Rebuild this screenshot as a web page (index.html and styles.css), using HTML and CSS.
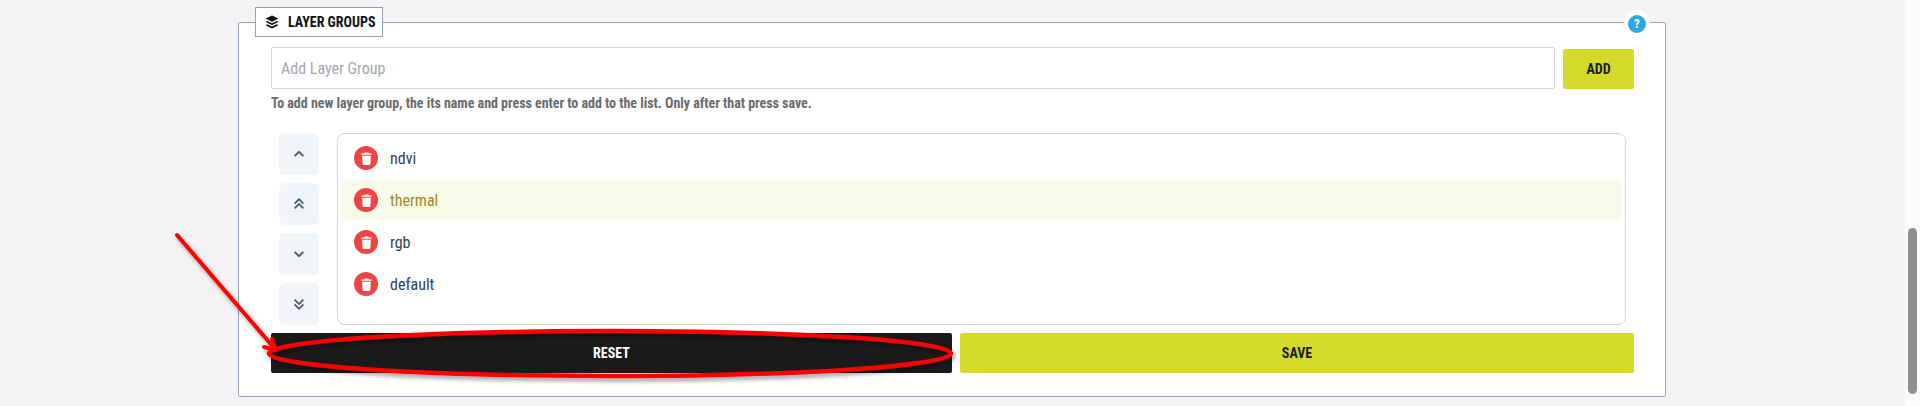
FILE: index.html
```html
<!DOCTYPE html>
<html lang="en">
<head>
    <meta charset="UTF-8">
    <meta name="viewport" content="width=device-width, initial-scale=1.0">
    <title>Layer Groups</title>
    <link rel="stylesheet" href="styles.css">
</head>
<body>
    <div class="page">
        <main class="content">
            <fieldset class="panel">
                <legend class="panel-title">
                    <svg class="title-icon" viewBox="0 0 24 24"><path d="M12 1 L23 6.2 L12 11.4 L1 6.2 Z"/><path d="M3.6 10.2 L12 14.2 L20.4 10.2 L23 11.9 L12 17 L1 11.9 Z"/><path d="M3.6 15.9 L12 19.9 L20.4 15.9 L23 17.6 L12 23 L1 17.6 Z"/></svg>
                    LAYER GROUPS
                </legend>
                <span class="help"><span class="help-dot">?</span></span>

                <div class="add-row">
                    <input class="add-input" type="text" placeholder="Add Layer Group">
                    <button class="btn btn-lime btn-add">ADD</button>
                </div>
                <p class="hint">To add new layer group, the its name and press enter to add to the list. Only after that press save.</p>

                <div class="editor">
                    <div class="move-col">
                        <button class="move-btn"><svg viewBox="0 0 16 16"><path d="M3 10.5 L8 5.5 L13 10.5"/></svg></button>
                        <button class="move-btn"><svg viewBox="0 0 16 16"><path d="M3 7.5 L8 2.5 L13 7.5"/><path d="M3 13 L8 8 L13 13"/></svg></button>
                        <button class="move-btn"><svg viewBox="0 0 16 16"><path d="M3 5.5 L8 10.5 L13 5.5"/></svg></button>
                        <button class="move-btn"><svg viewBox="0 0 16 16"><path d="M3 3 L8 8 L13 3"/><path d="M3 8.5 L8 13.5 L13 8.5"/></svg></button>
                    </div>
                    <ul class="group-list">
                        <li class="group-item"><span class="trash"><svg viewBox="0 0 12 14"><path d="M4 0.5 H8 L8.6 1.6 H11.6 V3 H0.4 V1.6 H3.4 Z"/><path d="M1.2 4 H10.8 L10.2 13 Q10.1 14 9.2 14 H2.8 Q1.9 14 1.8 13 Z"/></svg></span>ndvi</li>
                        <li class="group-item selected"><span class="trash"><svg viewBox="0 0 12 14"><path d="M4 0.5 H8 L8.6 1.6 H11.6 V3 H0.4 V1.6 H3.4 Z"/><path d="M1.2 4 H10.8 L10.2 13 Q10.1 14 9.2 14 H2.8 Q1.9 14 1.8 13 Z"/></svg></span>thermal</li>
                        <li class="group-item"><span class="trash"><svg viewBox="0 0 12 14"><path d="M4 0.5 H8 L8.6 1.6 H11.6 V3 H0.4 V1.6 H3.4 Z"/><path d="M1.2 4 H10.8 L10.2 13 Q10.1 14 9.2 14 H2.8 Q1.9 14 1.8 13 Z"/></svg></span>rgb</li>
                        <li class="group-item"><span class="trash"><svg viewBox="0 0 12 14"><path d="M4 0.5 H8 L8.6 1.6 H11.6 V3 H0.4 V1.6 H3.4 Z"/><path d="M1.2 4 H10.8 L10.2 13 Q10.1 14 9.2 14 H2.8 Q1.9 14 1.8 13 Z"/></svg></span>default</li>
                    </ul>
                </div>

                <div class="actions">
                    <button class="btn btn-dark">RESET</button>
                    <button class="btn btn-lime">SAVE</button>
                </div>
            </fieldset>
        </main>
        <div class="scrollbar"><div class="scrollbar-thumb"></div></div>
    </div>

    <!-- red marker drawn on top of the screenshot -->
    <svg class="markup" viewBox="0 0 1920 406">
        <defs>
            <filter id="markShadow" x="-5%" y="-30%" width="110%" height="170%">
                <feDropShadow dx="2" dy="3" stdDeviation="2" flood-color="#000" flood-opacity="0.4"/>
            </filter>
        </defs>
        <g filter="url(#markShadow)" fill="none" stroke="#ff0000" stroke-linecap="round">
            <path d="M177 235 L275 349" stroke-width="4"/>
            <path d="M272 339 L276 350 L264 347" stroke-width="4" stroke-linejoin="round"/>
            <ellipse cx="610" cy="353.5" rx="341" ry="22.5" stroke-width="4.5"/>
        </g>
    </svg>
</body>
</html>
```

FILE: styles.css
```css
* {
    margin: 0;
    padding: 0;
    box-sizing: border-box;
}

html, body {
    height: 406px;
    overflow: hidden;
}

body {
    background: #f4f4f4;
    font-family: "Roboto Condensed", "Liberation Sans Narrow", Roboto, sans-serif;
    font-stretch: condensed;
}

button {
    font-family: inherit;
    font-stretch: inherit;
    border: none;
    cursor: pointer;
}

.page {
    display: flex;
    height: 406px;
}

.content {
    flex: 1;
    padding: 7px 239px 0 238px;
}

.panel {
    position: relative;
    height: 390px;
    background: #fff;
    border: 1px solid #94a3bd;
    border-radius: 2px;
    padding: 10px 31px 0 32px;
}

.panel-title {
    display: flex;
    align-items: center;
    gap: 9px;
    width: 128px;
    height: 30px;
    margin-left: -16px;
    padding-left: 9px;
    background: #fff;
    border: 1px solid #94a3bd;
    font-size: 14px;
    font-weight: 700;
    color: #111;
    white-space: nowrap;
}

.title-icon {
    flex: none;
    width: 14px;
    height: 14px;
    fill: #111;
}

.help {
    position: absolute;
    top: -27px;
    right: 15px;
    width: 26px;
    height: 26px;
    display: flex;
    align-items: center;
    justify-content: center;
    background: #fff;
    border-radius: 50%;
}

.help-dot {
    width: 18px;
    height: 18px;
    margin-top: 2px;
    border-radius: 50%;
    background: #2ea8e0;
    color: #fff;
    font-size: 13px;
    font-weight: 700;
    line-height: 18px;
    text-align: center;
}

.add-row {
    display: flex;
    align-items: flex-end;
    gap: 8px;
}

.add-input {
    flex: 1;
    height: 42px;
    padding: 0 9px;
    border: 1px solid #d2d3dc;
    border-radius: 2px;
    font-family: inherit;
    font-stretch: inherit;
    font-size: 16px;
}

.add-input::placeholder {
    color: #a3a8b4;
}

.btn {
    height: 40px;
    border-radius: 2px;
    font-size: 14px;
    font-weight: 700;
}

.btn-lime {
    background: #d4da2a;
    color: #1a1a1a;
}

.btn-dark {
    background: #1a1a1a;
    color: #fff;
}

.btn-add {
    width: 71px;
}

.hint {
    margin-top: 6px;
    font-size: 14px;
    font-weight: 700;
    line-height: 16px;
    letter-spacing: -0.03px;
    color: #6b6b6b;
}

.editor {
    display: flex;
    gap: 18px;
    margin: 22px 8px 0;
}

.move-col {
    display: flex;
    flex-direction: column;
    gap: 8px;
}

.move-btn {
    width: 40px;
    height: 42px;
    display: flex;
    align-items: center;
    justify-content: center;
    background: #f1f5f9;
    border-radius: 6px;
}

.move-btn svg {
    width: 14px;
    height: 14px;
    fill: none;
    stroke: #475569;
    stroke-width: 2;
}

.group-list {
    flex: 1;
    height: 192px;
    list-style: none;
    display: flex;
    flex-direction: column;
    gap: 2px;
    padding: 4px;
    border: 1px solid #cbd5e1;
    border-radius: 8px;
}

.group-item {
    display: flex;
    align-items: center;
    gap: 12px;
    height: 40px;
    padding-left: 12px;
    border-radius: 4px;
    font-size: 16px;
    color: #334155;
}

.group-item.selected {
    background: #f8fbe9;
    color: #9c8a1c;
}

.trash {
    width: 24px;
    height: 24px;
    display: flex;
    align-items: center;
    justify-content: center;
    background: #ef4444;
    border-radius: 50%;
}

.trash svg {
    width: 11px;
    height: 13px;
    fill: #fff;
}

.actions {
    display: grid;
    grid-template-columns: 681px 1fr;
    gap: 8px;
    margin-top: 8px;
}

.scrollbar {
    width: 15px;
    background: #fafafa;
    padding: 228px 3px 0;
}

.scrollbar-thumb {
    height: 166px;
    background: #8f8f8f;
    border-radius: 5px;
}

.markup {
    position: absolute;
    left: 0;
    top: 0;
    width: 1920px;
    height: 406px;
    pointer-events: none;
}
```
